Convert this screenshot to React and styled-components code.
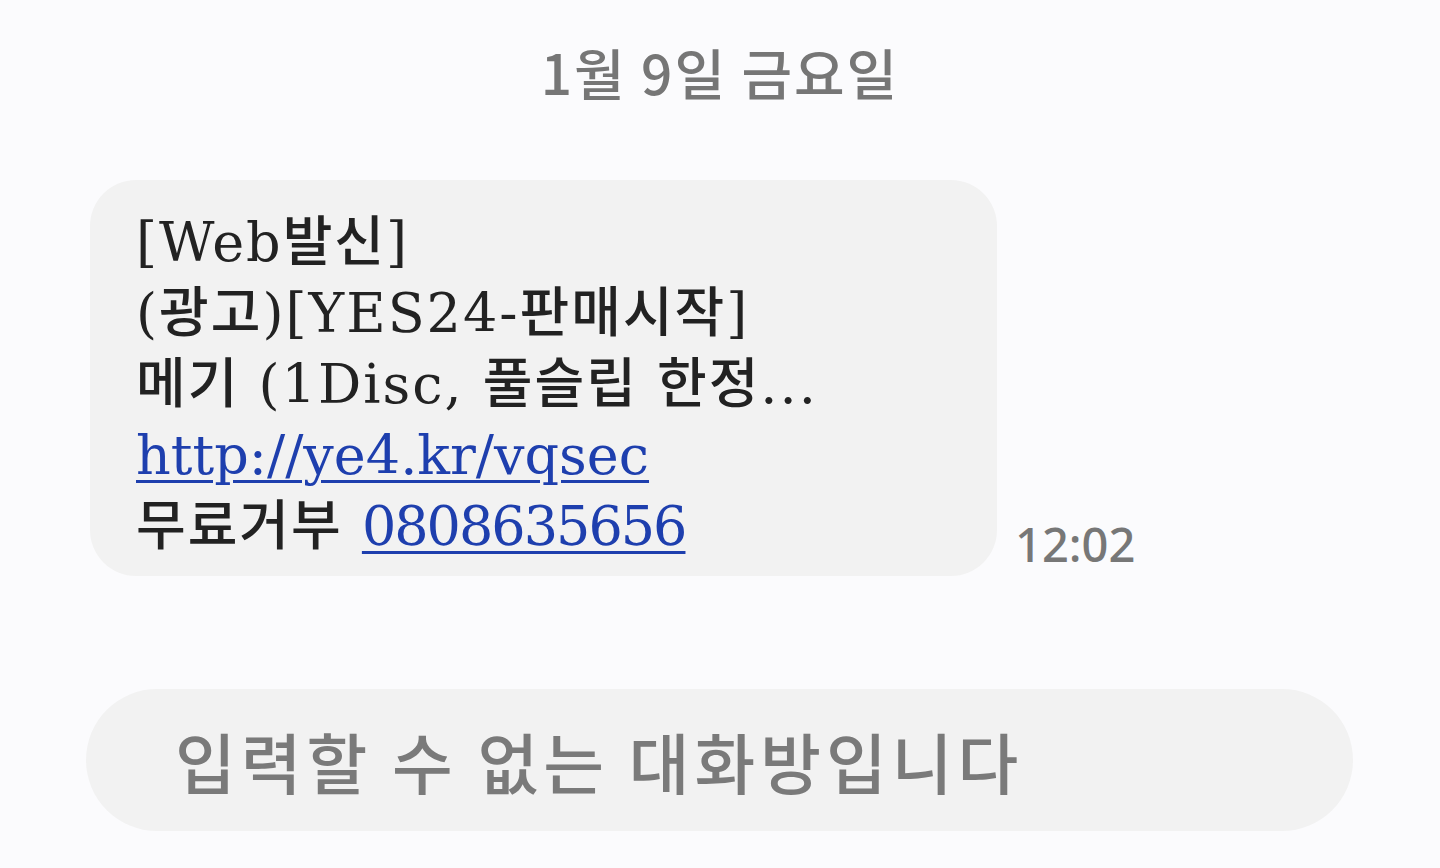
import React from 'react';
import styled, { createGlobalStyle } from 'styled-components';

const GlobalStyle = createGlobalStyle`
  html, body {
    margin: 0;
    padding: 0;
    background: #fbfbfd;
  }
  body {
    font-family: "Noto Sans CJK KR", "Noto Sans", sans-serif;
  }
`;

const Page = styled.div`
  width: 1440px;
  height: 868px;
  overflow: hidden;
  display: flex;
  flex-direction: column;
  background: #fbfbfd;
`;

const DateLabel = styled.div`
  margin-top: 36px;
  text-align: center;
  font-size: 55px;
  font-weight: 500;
  letter-spacing: 2px;
  line-height: 70px;
  color: #767676;
`;

const MessageRow = styled.div`
  margin-top: 74px;
  padding-left: 90px;
  display: flex;
  align-items: flex-end;
  gap: 18px;
`;

const Bubble = styled.div`
  width: 907px;
  box-sizing: border-box;
  background: #f2f2f2;
  border-radius: 46px;
  padding: 27px 40px 14px 46px;
  font-family: "DejaVu Serif", "Noto Sans CJK KR", serif;
  font-size: 54px;
  font-weight: 500;
  letter-spacing: 2px;
  line-height: 71px;
  color: #222222;
`;

const Line = styled.div`
  white-space: nowrap;
`;

const Link = styled.a`
  color: #1e3fae;
  letter-spacing: ${p => (p.$tight ? '-2px' : '0')};
  text-decoration: underline;
  text-decoration-thickness: 3px;
  text-underline-offset: 6px;
`;

const Time = styled.div`
  font-family: "Noto Sans", sans-serif;
  font-size: 47px;
  font-weight: 500;
  line-height: 60px;
  color: #777777;
  padding-bottom: 2px;
`;

const InputBar = styled.div`
  margin: 113px 0 0 86px;
  width: 1267px;
  height: 142px;
  box-sizing: border-box;
  border-radius: 71px;
  background: #f2f2f2;
  display: flex;
  align-items: center;
  padding-left: 89px;
  font-size: 66px;
  font-weight: 500;
  letter-spacing: 5px;
  color: #7a7a7a;
`;

export default function App() {
  return (
    <>
      <GlobalStyle />
      <Page>
        <DateLabel>1월 9일 금요일</DateLabel>
        <MessageRow>
          <Bubble>
            <Line>[Web발신]</Line>
            <Line>(광고)[YES24-판매시작]</Line>
            <Line>메기 (1Disc, 풀슬립 한정...</Line>
            <Line>
              <Link href="#">http://ye4.kr/vqsec</Link>
            </Line>
            <Line>
              무료거부 <Link href="#" $tight>0808635656</Link>
            </Line>
          </Bubble>
          <Time>12:02</Time>
        </MessageRow>
        <InputBar>입력할 수 없는 대화방입니다</InputBar>
      </Page>
    </>
  );
}
